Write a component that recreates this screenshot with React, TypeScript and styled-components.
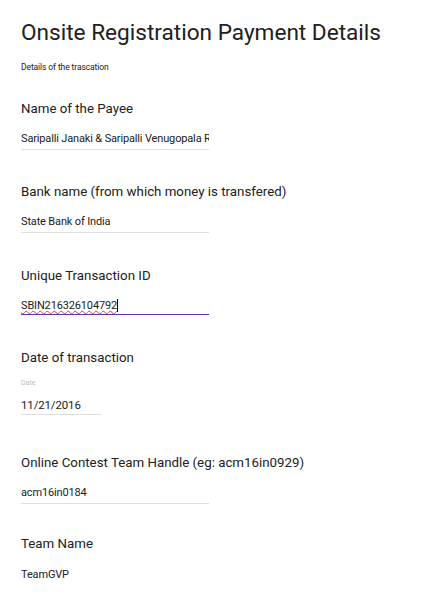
import React from "react";
import styled, { createGlobalStyle } from "styled-components";

const Global = createGlobalStyle`
  html, body { margin: 0; padding: 0; background: #fff; }
  body { font-family: Roboto, "Noto Sans", Arial, sans-serif; color: #212121; }
`;

const Page = styled.div`
  padding: 21px 21px 0 21px;
  display: flex;
  flex-direction: column;
`;

const Title = styled.h1`
  margin: 0;
  font-size: 22.6px;
  font-weight: 400;
  line-height: 24px;
  color: #212121;
`;

const Description = styled.div`
  margin-top: 17px;
  font-size: 8.5px;
  line-height: 10px;
  color: #212121;
  letter-spacing: -0.1px;
`;

const Question = styled.section<{ $space: number }>`
  display: flex;
  flex-direction: column;
  margin-top: ${(p) => p.$space}px;
`;

const Label = styled.div`
  font-size: 13.3px;
  line-height: 16px;
  color: #212121;
`;

const SubLabel = styled.div`
  margin-top: 13px;
  font-size: 7px;
  line-height: 8px;
  color: #bdbdbd;
`;

const Field = styled.div<{
  $width: number;
  $active?: boolean;
  $plain?: boolean;
  $gap: number;
  $pad: number;
  $size: number;
}>`
  margin-top: ${(p) => p.$gap}px;
  width: ${(p) => p.$width}px;
  padding-bottom: ${(p) => p.$pad}px;
  overflow-x: clip;
  overflow-y: visible;
  white-space: nowrap;
  font-size: ${(p) => p.$size}px;
  line-height: 14px;
  color: #212121;
  letter-spacing: -0.15px;
  border-bottom: 1px solid
    ${(p) => (p.$plain ? "transparent" : p.$active ? "#5e35b1" : "#e0e0e0")};
`;

const Typed = styled.span`
  border-right: 1px solid #000;
`;

const Misspelled = styled.span`
  text-decoration: underline wavy #e53935;
  text-decoration-thickness: 1px;
  text-underline-offset: 1px;
`;

type Q = {
  label: string;
  value: string;
  width?: number;
  active?: boolean;
  plain?: boolean;
  sub?: string;
  size?: number;
  space: number;
};

const questions: Q[] = [
  { label: "Name of the Payee", value: "Saripalli Janaki & Saripalli Venugopala Rao", space: 29 },
  { label: "Bank name (from which money is transfered)", value: "State Bank of India", space: 34 },
  { label: "Unique Transaction ID", value: "SBIN216326104792", active: true, space: 35 },
  { label: "Date of transaction", value: "11/21/2016", sub: "Date", width: 80, size: 11.5, space: 35 },
  { label: "Online Contest Team Handle (eg: acm16in0929)", value: "acm16in0184", space: 40 },
  { label: "Team Name", value: "TeamGVP", plain: true, space: 32 },
];

const padFor = (q: Q) => (q.sub ? 2 : q.active ? 1 : 3);

export default function App() {
  return (
    <>
      <Global />
      <Page>
        <Title>Onsite Registration Payment Details</Title>
        <Description>Details of the trascation</Description>
        {questions.map((q) => (
          <Question key={q.label} $space={q.space}>
            <Label>{q.label}</Label>
            {q.sub && <SubLabel>{q.sub}</SubLabel>}
            <Field
              $width={q.width ?? 188}
              $active={q.active}
              $plain={q.plain}
              $gap={q.sub ? 11 : q.plain ? 16 : 15}
              $pad={padFor(q)}
              $size={q.size ?? 11}
            >
              {q.active ? (
                <Typed>
                  <Misspelled>{q.value}</Misspelled>
                </Typed>
              ) : (
                q.value
              )}
            </Field>
          </Question>
        ))}
      </Page>
    </>
  );
}
